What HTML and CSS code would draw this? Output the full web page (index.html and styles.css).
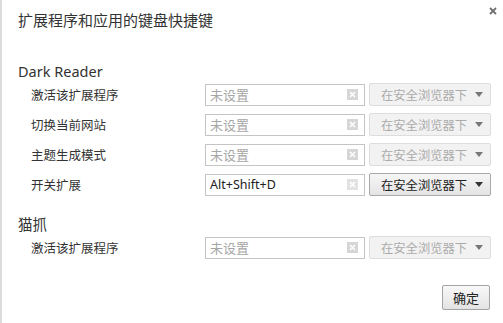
FILE: index.html
```html
<!DOCTYPE html>
<html lang="zh-CN">
<head>
<meta charset="utf-8">
<title>扩展程序和应用的键盘快捷键</title>
<link rel="stylesheet" href="styles.css">
</head>
<body>
<div class="dialog">
  <header class="head">
    <h1 class="title">扩展程序和应用的键盘快捷键</h1>
    <span class="close"><svg width="8" height="8" viewBox="0 0 8 8"><path d="M1 1L7 7M7 1L1 7" stroke="#6f6f6f" stroke-width="1.8"/></svg></span>
  </header>

  <section class="ext">
    <h2 class="ext-name">Dark Reader</h2>
    <div class="row">
      <span class="label">激活该扩展程序</span>
      <div class="keybox"><span class="placeholder">未设置</span><span class="clear"><svg width="11" height="11" viewBox="0 0 11 11"><rect width="11" height="11" fill="#d6d6d6"/><path d="M3 3L8 8M8 3L3 8" stroke="#fff" stroke-width="1.5"/></svg></span></div>
      <div class="scope disabled">在安全浏览器下<span class="arrow"></span></div>
    </div>
    <div class="row">
      <span class="label">切换当前网站</span>
      <div class="keybox"><span class="placeholder">未设置</span><span class="clear"><svg width="11" height="11" viewBox="0 0 11 11"><rect width="11" height="11" fill="#d6d6d6"/><path d="M3 3L8 8M8 3L3 8" stroke="#fff" stroke-width="1.5"/></svg></span></div>
      <div class="scope disabled">在安全浏览器下<span class="arrow"></span></div>
    </div>
    <div class="row">
      <span class="label">主题生成模式</span>
      <div class="keybox"><span class="placeholder">未设置</span><span class="clear"><svg width="11" height="11" viewBox="0 0 11 11"><rect width="11" height="11" fill="#d6d6d6"/><path d="M3 3L8 8M8 3L3 8" stroke="#fff" stroke-width="1.5"/></svg></span></div>
      <div class="scope disabled">在安全浏览器下<span class="arrow"></span></div>
    </div>
    <div class="row">
      <span class="label">开关扩展</span>
      <div class="keybox"><span class="value">Alt+Shift+D</span><span class="clear"><svg width="11" height="11" viewBox="0 0 11 11"><rect width="11" height="11" fill="#e2e2e2"/><path d="M3 3L8 8M8 3L3 8" stroke="#fff" stroke-width="1.5"/></svg></span></div>
      <div class="scope">在安全浏览器下<span class="arrow"></span></div>
    </div>
  </section>

  <section class="ext second">
    <h2 class="ext-name">猫抓</h2>
    <div class="row">
      <span class="label">激活该扩展程序</span>
      <div class="keybox"><span class="placeholder">未设置</span><span class="clear"><svg width="11" height="11" viewBox="0 0 11 11"><rect width="11" height="11" fill="#d6d6d6"/><path d="M3 3L8 8M8 3L3 8" stroke="#fff" stroke-width="1.5"/></svg></span></div>
      <div class="scope disabled">在安全浏览器下<span class="arrow"></span></div>
    </div>
  </section>

  <footer class="foot">
    <button class="ok" type="button">确定</button>
  </footer>
</div>
</body>
</html>
```

FILE: styles.css
```css
* { box-sizing: border-box; }
html, body { margin: 0; padding: 0; background: #fff; }
body {
  font-family: "Noto Sans", "Noto Sans CJK SC", sans-serif;
  color: #333;
}
.dialog {
  width: 503px;
  height: 323px;
  border-left: 2px solid #dcdcdc;
  padding: 10px 13px 0 16px;
  display: flex;
  flex-direction: column;
}
.head {
  display: flex;
  justify-content: space-between;
  align-items: flex-start;
}
.title {
  margin: 0;
  font-size: 15px;
  font-weight: normal;
  line-height: 20px;
  color: #333;
  font-family: "Noto Sans CJK SC", sans-serif;
}
.close {
  display: flex;
  margin-top: -3px;
  margin-right: -7px;
}
.ext { margin-top: 31px; }
.ext.second { margin-top: 11px; }
.ext-name {
  margin: 0 0 2px;
  font-size: 14.5px;
  font-weight: normal;
  line-height: 20px;
  color: #333;
}
.row {
  display: grid;
  grid-template-columns: 170px 160px 122px;
  column-gap: 4px;
  align-items: center;
  height: 22px;
  margin-bottom: 8px;
  padding-left: 13px;
}
.label {
  font-family: "Noto Sans CJK SC", sans-serif;
  font-size: 12.5px;
  color: #333;
  line-height: 16px;
}
.keybox {
  height: 22px;
  border: 1px solid #c4c4c4;
  background: #fff;
  display: flex;
  align-items: center;
  justify-content: space-between;
  padding: 0 6px 0 4px;
  font-size: 12.5px;
}
.placeholder {
  font-family: "Noto Sans CJK SC", sans-serif;
  color: #a6a6a6;
  font-size: 13px;
  line-height: 16px;
}
.value {
  font-family: "Noto Sans", sans-serif;
  color: #222;
  font-size: 12.5px;
  line-height: 16px;
}
.clear { display: flex; }
.scope {
  height: 23px;
  border: 1px solid #a9a9a9;
  border-radius: 2px;
  background: linear-gradient(#f6f6f6, #e4e4e4);
  display: flex;
  align-items: center;
  justify-content: space-between;
  padding: 0 7px 0 11px;
  font-family: "Noto Sans CJK SC", sans-serif;
  font-size: 12.3px;
  line-height: 16px;
  color: #222;
}
.scope.disabled {
  border-color: #dddddd;
  background: #f2f2f2;
  color: #ababab;
}
.arrow {
  width: 0;
  height: 0;
  border-left: 4.5px solid transparent;
  border-right: 4.5px solid transparent;
  border-top: 5px solid #333;
}
.disabled .arrow { border-top-color: #777; }
.foot {
  display: flex;
  justify-content: flex-end;
  margin-top: 19px;
}
.ok {
  width: 48px;
  height: 25px;
  border: 1px solid #a4a4a4;
  border-radius: 2px;
  background: linear-gradient(#f8f8f8, #e3e3e3);
  font-family: "Noto Sans CJK SC", sans-serif;
  font-size: 13px;
  color: #222;
  padding: 0;
}
```
